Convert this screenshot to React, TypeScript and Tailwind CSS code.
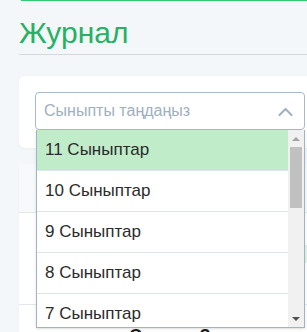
const classes = ['11 Сыныптар', '10 Сыныптар', '9 Сыныптар', '8 Сыныптар', '7 Сыныптар'];

const ClassDropdown = () => {
  return (
    <div className="absolute top-full left-px right-0 z-10 flex h-[198px] border border-t-0 border-[#a2b3c5] bg-white shadow-sm">
      <ul className="flex-1 overflow-hidden">
        {classes.map((c, i) => (
          <li
            key={c}
            className={
              i === 0
                ? 'flex h-[41px] shrink-0 items-center border-b border-[#dde3ea] bg-[#c0ecca] pl-2 text-[17px] text-[#2b2b2b]'
                : 'flex h-[41px] shrink-0 items-center border-b border-[#dde3ea] pl-2 text-[17px] text-[#2b2b2b]'
            }
          >
            {c}
          </li>
        ))}
      </ul>
      {/* scrollbar */}
      <div className="flex w-[16px] flex-col items-center bg-[#f1f1f1]">
        <div className="flex h-[17px] w-full items-center justify-center">
          <div className="h-0 w-0 border-x-[4px] border-b-[4px] border-x-transparent border-b-[#a3a3a3]" />
        </div>
        <div className="h-[61px] w-[12px] bg-[#c1c1c1]" />
        <div className="flex-1" />
        <div className="flex h-[17px] w-full items-center justify-center">
          <div className="h-0 w-0 border-x-[4px] border-t-[4px] border-x-transparent border-t-[#505050]" />
        </div>
      </div>
    </div>
  );
};

export default function App() {
  return (
    <div
      className="h-[332px] w-[307px] overflow-hidden bg-[#f4f7fa] pl-[19px]"
      style={{ fontFamily: '"Liberation Sans", Arial, sans-serif' }}
    >
      <div className="ml-[2px] h-px w-[400px] bg-[#2ecc71] shadow-[0_2px_6px_rgba(0,0,0,0.06)]" />

      <div className="w-[400px] border-b border-[#d6d9dc] pt-[16px] pb-[6px]">
        <h1 className="text-[30px] leading-[31px] text-[#26b163]">Журнал</h1>
      </div>

      <div className="mt-[21px] w-[302px] rounded-md bg-white px-4 pt-4 pb-[18px] shadow-[0_1px_3px_rgba(0,0,0,0.04)]">
        <div className="relative">
          <div className="flex h-[38px] w-[270px] items-center justify-between rounded border border-[#a9b9c9] bg-white pr-[10px] pl-2">
            <span className="text-[16px] text-[#9eafc0]">Сыныпты таңдаңыз</span>
            <svg width="15" height="9" viewBox="0 0 15 9" fill="none" className="mr-px">
              <polyline
                points="1.5,8 7.5,2 13.5,8"
                stroke="#9eafc0"
                strokeWidth="2"
                strokeLinecap="round"
                strokeLinejoin="round"
              />
            </svg>
          </div>
          <ClassDropdown />
        </div>
      </div>

      <div className="mt-[16px] w-[400px] rounded-md bg-white shadow-[0_1px_3px_rgba(0,0,0,0.04)]">
        <div className="h-[49px] border-b border-[#e2e7ee] bg-[#f7f9fb]" />
        <div className="flex h-[92px] items-start justify-end border-b border-[#e2e7ee] pt-[32px] pr-[112px]">
          <div className="h-[18px] w-[24px] bg-[#e2f4e6]" />
        </div>
        <div className="pt-[18px] pl-[110px] text-[18px] font-bold text-[#1b1b1b]">Сынып ?</div>
      </div>
    </div>
  );
}
